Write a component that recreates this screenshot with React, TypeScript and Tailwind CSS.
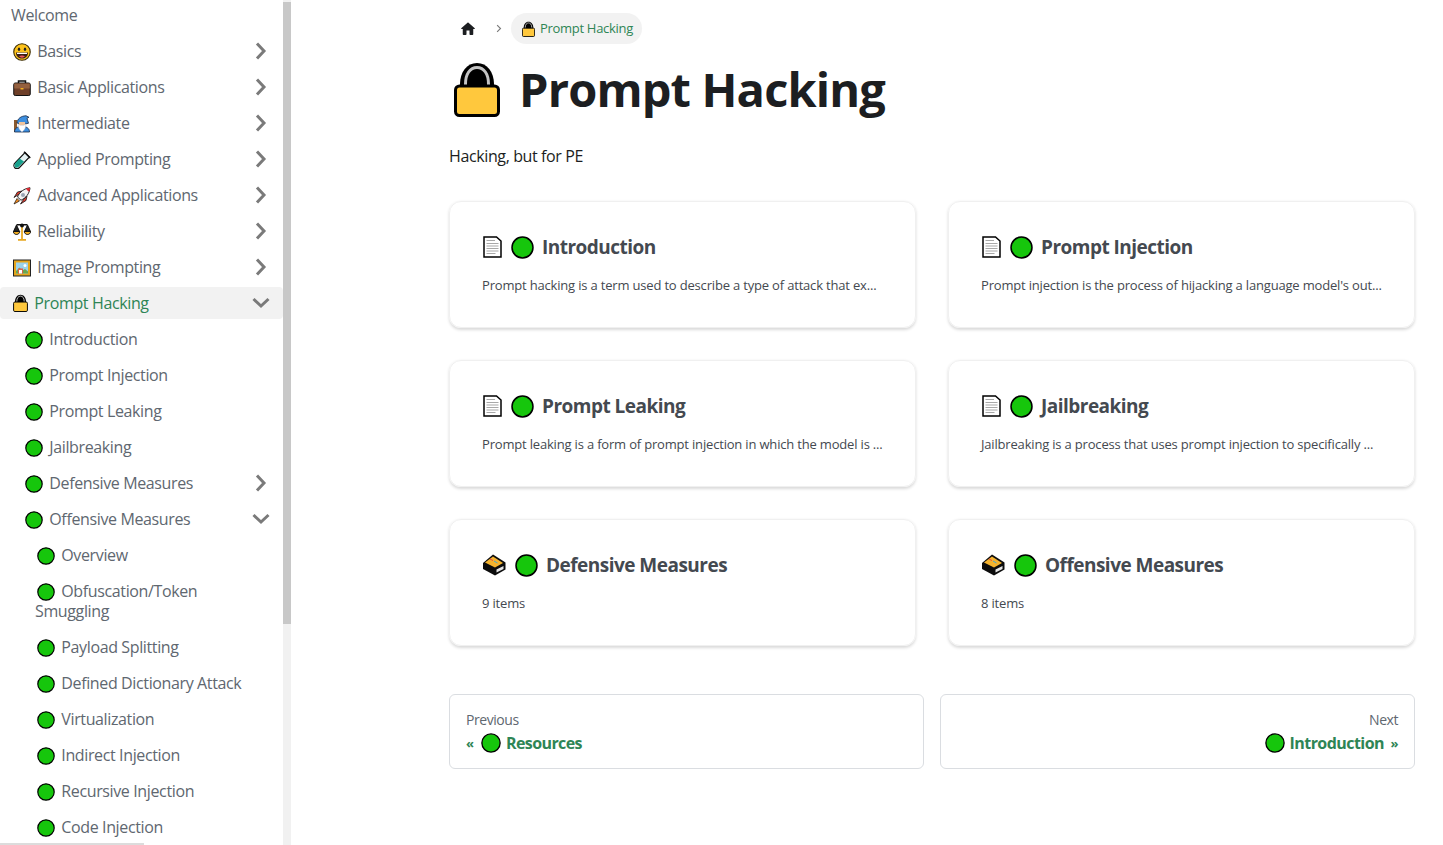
import React from "react";

const Circle = ({ s = 18, cls = "" }: { s?: number; cls?: string }) => (
  <svg width={s} height={s} viewBox="0 0 36 36" className={"inline-block shrink-0 " + cls}>
    <circle cx="18" cy="18" r="16.4" fill="#16c60c" stroke="#000" strokeWidth="2.4" />
  </svg>
);
const Smile = () => (
  <svg width="18" height="18" viewBox="0 0 36 36" className="inline-block align-[-4px] mx-[2px]">
    <circle cx="18" cy="18" r="16.500" fill="#fcc21b" stroke="#3a2a00" strokeWidth="2.200" />
    <ellipse cx="12" cy="12.500" rx="2.400" ry="3.600" fill="#222" />
    <ellipse cx="24" cy="12.500" rx="2.400" ry="3.600" fill="#222" />
    <path d="M6 19h24c0 8-6 12-12 12S6 27 6 19z" fill="#3a1f14" />
    <path d="M8 19.500h20v2.500H8z" fill="#fff" />
    <path d="M12 27c3-2.500 9-2.500 12 0-3 3-9 3-12 0z" fill="#f0565c" />
  </svg>
);
const Brief = () => (
  <svg width="18" height="18" viewBox="0 0 36 36" className="inline-block align-[-4px] mx-[2px]">
    <path d="M11 10V4h14v6" fill="none" stroke="#111" strokeWidth="3" />
    <rect x="1.500" y="8" width="33" height="25" rx="3" fill="#6e3f28" stroke="#111" strokeWidth="2" />
    <rect x="2.500" y="9" width="31" height="10" fill="#94603f" />
    <rect x="15" y="18" width="6" height="3" fill="#f2b01e" />
  </svg>
);
const Wizard = () => (
  <svg width="18" height="18" viewBox="0 0 36 36" className="inline-block align-[-4px] mx-[2px]">
    <path d="M5 10v24" stroke="#8a5a30" strokeWidth="6" />
    <path d="M3 34c0-7 5-11 15-11s15 4 15 11z" fill="#3d8fe0" stroke="#1a2a44" strokeWidth="1.600" />
    <path d="M8 16C9 7 16 2 26 1.500l6 3-4 2 3 10c-6 2-17 2-23-.5z" fill="#3d8fe0" stroke="#1a2a44" strokeWidth="1.600" />
    <rect x="12" y="14" width="12" height="7" fill="#f2c49b" />
    <path d="M10.500 18l4 2.500h7l4-2.500c1 7-3 13-7.500 16-4.500-3-8.500-9-7.500-16z" fill="#fff" stroke="#aab" strokeWidth=".8" />
  </svg>
);
const Tube = () => (
  <svg width="18" height="18" viewBox="0 0 36 36" className="inline-block align-[-4px] mx-[2px]">
    <path d="M24 3l9 9L13 33c-3 3-7 3-9.500 .5S1 27 4 24z" fill="#e6f2f4" stroke="#111" strokeWidth="2.200" />
    <path d="M13 15l9 6L11 32c-3 2-5 2-7 0s-1-5 1-8z" fill="#16a08c" />
    <path d="M22 1.500l12.500 12.500" stroke="#111" strokeWidth="3" />
  </svg>
);
const Rocket = () => (
  <svg width="18" height="18" viewBox="0 0 36 36" className="inline-block align-[-4px] mx-[2px]">
    <path d="M11 15l-9 6 7-11 9-2zM21 25l-6 9 11-7 2-9z" fill="#e03c30" stroke="#111" strokeWidth="1.600" />
    <path d="M9 20C13 10 22 3 34 1.500c-1 12-8 20-18 25z" fill="#f4f4f4" stroke="#111" strokeWidth="1.800" />
    <path d="M26 3l8-1.500-1.500 8c-2-1-5.500-4-6.500-6.500z" fill="#e0242c" />
    <circle cx="20" cy="16" r="4" fill="#9aa6b4" />
    <path d="M8 23l5 5-11 6z" fill="#f58a1c" stroke="#111" strokeWidth="1.400" />
  </svg>
);
const Scale = () => (
  <svg width="18" height="18" viewBox="0 0 36 36" className="inline-block align-[-4px] mx-[2px]">
    <path d="M18 4v28M10 33.500h16" stroke="#e8a820" strokeWidth="3.500" fill="none" />
    <path d="M7 3.500h22" stroke="#111" strokeWidth="3" />
    <path d="M7 4l-6 13h12zM29 4l-6 13h12z" fill="#222" stroke="#111" strokeWidth="2" />
    <path d="M.5 17c1 8 12 8 13 0zM22.500 17c1 8 12 8 13 0z" fill="#f0ac20" stroke="#111" strokeWidth="2" />
    <circle cx="18" cy="5" r="4" fill="#111" />
  </svg>
);
const Picture = () => (
  <svg width="18" height="18" viewBox="0 0 36 36" className="inline-block align-[-4px] mx-[2px]">
    <rect x="1" y="2" width="34" height="32" fill="#e6a51c" stroke="#222" strokeWidth="2" />
    <rect x="6" y="7" width="24" height="22" fill="#9bd2ea" />
    <path d="M6 29v-5l7-7 6 6 5-3 6 5v4z" fill="#6aa84f" />
    <path d="M10 19h10v10H10z" fill="#e0604a" />
    <path d="M12 22h6v7h-6z" fill="#fff" />
    <circle cx="24" cy="13" r="3" fill="#fff" />
  </svg>
);
const Lock = ({ w, h, cls }: { w: number; h: number; cls: string }) => (
  <svg width={w} height={h} viewBox="0 0 46 56" className={cls}>
    <path d="M6 30V23C6 11 13 2 23 2s17 9 17 21v7z" fill="#000" />
    <path d="M11.500 26V23C11.500 13 16 6.500 23 6.500s11.500 6.500 11.500 16.500v3" fill="none" stroke="#c4c4c4" strokeWidth="3" />
    <rect x="1.500" y="25" width="43" height="29.500" rx="4" fill="#ffc83d" stroke="#000" strokeWidth="3" />
  </svg>
);
const Doc = () => (
  <svg width="20" height="22" viewBox="0 0 20 22" className="inline-block">
    <path d="M2 1h12.500l4.500 4v16H2z" fill="#fff" stroke="#000" strokeWidth="1.500" />
    <path d="M4.500 4.500h8.500M4.500 7.500h12M4.500 10h12M4.500 12.500h12M4.500 15h12M4.500 17.500h9" stroke="#a8a8a8" strokeWidth="1.100" />
  </svg>
);
const Box = () => (
  <svg width="24" height="22" viewBox="0 0 24 22" className="inline-block">
    <path d="M1 9L11 .5l12.500 8v7L13 21.500 1 15z" fill="#0c0c0c" />
    <path d="M3 8.500L11 2.500l10 6.500-8 4.500z" fill="#f5b32e" />
    <path d="M14.500 15.500l7-3.500v3l-7 3.500z" fill="#e6e6e6" />
    <path d="M8 5l3 1.500" stroke="#e04a4a" strokeWidth="1" />
    <path d="M12 7l3.500 2" stroke="#3fa7d6" strokeWidth="1" />
  </svg>
);

const Chev = ({ down }: { down?: boolean }) => (
  <svg width="18" height="18" viewBox="0 0 18 18" className="text-[#7a7a7a]">
    <path d={down ? "M1.500 5l7.500 7 7.500-7" : "M5 1.500l7 7.500-7 7.500"} fill="none" stroke="currentColor" strokeWidth="3" />
  </svg>
);

type R = { t: string; lvl: number; ic?: React.ReactNode; c?: "r" | "d"; active?: boolean };
const dot = <Circle cls="align-[-4px] mx-[2px]" />;
const rows: R[] = [
  { t: "Welcome", lvl: 1 },
  { t: "Basics", lvl: 1, ic: <Smile />, c: "r" },
  { t: "Basic Applications", lvl: 1, ic: <Brief />, c: "r" },
  { t: "Intermediate", lvl: 1, ic: <Wizard />, c: "r" },
  { t: "Applied Prompting", lvl: 1, ic: <Tube />, c: "r" },
  { t: "Advanced Applications", lvl: 1, ic: <Rocket />, c: "r" },
  { t: "Reliability", lvl: 1, ic: <Scale />, c: "r" },
  { t: "Image Prompting", lvl: 1, ic: <Picture />, c: "r" },
  { t: "Prompt Hacking", lvl: 1, ic: <Lock w={15} h={18} cls="inline-block align-[-3px] mx-[2px]" />, c: "d", active: true },
  { t: "Introduction", lvl: 2, ic: dot },
  { t: "Prompt Injection", lvl: 2, ic: dot },
  { t: "Prompt Leaking", lvl: 2, ic: dot },
  { t: "Jailbreaking", lvl: 2, ic: dot },
  { t: "Defensive Measures", lvl: 2, ic: dot, c: "r" },
  { t: "Offensive Measures", lvl: 2, ic: dot, c: "d" },
  { t: "Overview", lvl: 3, ic: dot },
  { t: "Obfuscation/Token Smuggling", lvl: 3, ic: dot },
  { t: "Payload Splitting", lvl: 3, ic: dot },
  { t: "Defined Dictionary Attack", lvl: 3, ic: dot },
  { t: "Virtualization", lvl: 3, ic: dot },
  { t: "Indirect Injection", lvl: 3, ic: dot },
  { t: "Recursive Injection", lvl: 3, ic: dot },
  { t: "Code Injection", lvl: 3, ic: dot },
];

const pad: Record<number, string> = { 1: "pl-[11px]", 2: "pl-[23px]", 3: "pl-[35px] pr-[40px]" };

const Sidebar = () => (
  <aside className="relative flex h-full w-[291px] shrink-0 overflow-hidden">
    <nav className="flex w-[283px] shrink-0 flex-col gap-1 -mt-[1px] text-[16px] leading-5 tracking-[-0.37px] text-[#606770]">
      {rows.map((r) => (
        <div key={r.t} className={"flex shrink-0 items-center justify-between rounded " + (r.active ? "bg-[#f2f2f2] text-[#2e8555]" : "")}>
          <span className={"block flex-1 py-[6px] " + pad[r.lvl]}>
            {r.ic}
            {r.ic ? <span className="mr-[0.5px]"> </span> : ""}
            {r.t}
          </span>
          {r.c && (
            <span className="flex h-8 w-11 items-center justify-center">
              <Chev down={r.c === "d"} />
            </span>
          )}
        </div>
      ))}
    </nav>
    <div className="w-2 shrink-0 bg-[#f1f1f1]">
      <div className="mt-[2px] h-[622px] bg-[#c8c8c8]" />
    </div>
    <div className="absolute bottom-0 left-0 h-[2px] w-[144px] bg-[#dcdcdc]" />
  </aside>
);

const cards = [
  { ic: <Doc />, t: "Introduction", d: "Prompt hacking is a term used to describe a type of attack that ex..." },
  { ic: <Doc />, t: "Prompt Injection", d: "Prompt injection is the process of hijacking a language model's out..." },
  { ic: <Doc />, t: "Prompt Leaking", d: "Prompt leaking is a form of prompt injection in which the model is ..." },
  { ic: <Doc />, t: "Jailbreaking", d: "Jailbreaking is a process that uses prompt injection to specifically ..." },
  { ic: <Box />, t: "Defensive Measures", d: "9 items" },
  { ic: <Box />, t: "Offensive Measures", d: "8 items" },
];

export default function App() {
  return (
    <div className="flex h-[845px] overflow-hidden bg-white font-['Open_Sans','Noto_Sans',sans-serif] text-[#1c1e21]">
      <Sidebar />
      <main className="flex-1 pl-[158px] pr-[28px]">
        <div className="mt-[13px] flex h-[31px] items-center">
          <svg viewBox="0 0 24 24" width="18" height="18" className="ml-[10px]">
            <path d="M10 19v-5h4v5c0 .55.45 1 1 1h3c.55 0 1-.45 1-1v-7h1.700c.46 0 .68-.57.33-.87L12.670 3.600c-.38-.34-.96-.34-1.340 0l-8.360 7.530c-.34.3-.13.87.33.87H5v7c0 .55.45 1 1 1h3c.55 0 1-.45 1-1z" fill="#1c1e21" />
          </svg>
          <svg viewBox="0 0 8 12" width="6" height="9" className="ml-[19px] mr-[9px]">
            <path d="M1.500 1.500L6 6l-4.500 4.500" fill="none" stroke="#7a7a7a" strokeWidth="1.500" />
          </svg>
          <div className="flex h-[31px] items-center gap-[5px] rounded-full bg-[#f2f2f2] pl-[11px] pr-[9px] pt-[1px] text-[13px] tracking-[-0.3px] text-[#2e8555]">
            <Lock w={13} h={16} cls="inline-block -mt-[1px]" />
            Prompt Hacking
          </div>
        </div>
        <h1 className="mt-[15px] flex items-center gap-[19px] pl-[5px] text-[47px] font-bold leading-[60px] tracking-[-0.85px]">
          <Lock w={46} h={56} cls="block" />
          Prompt Hacking
        </h1>
        <p className="mt-[25px] text-[16px] leading-6 tracking-[-0.38px]">Hacking, but for PE</p>
        <div className="mt-[33px] grid grid-cols-2 gap-8">
          {cards.map((c) => (
            <div key={c.t} className="h-[127px] rounded-xl border border-[#f0f0f0] p-8 shadow-[0_1.5px_3px_0_rgba(0,0,0,0.15)]">
              <h2 className="flex h-[26px] items-center gap-[8px] text-[19px] font-bold tracking-[-0.52px] text-[#444950]">
                <span className="flex">{c.ic}</span>
                <Circle s={23} cls="ml-[1px]" />
                {c.t}
              </h2>
              <p className="mt-[15px] whitespace-nowrap text-[13px] leading-5 tracking-[-0.18px] text-[#444950]">{c.d}</p>
            </div>
          ))}
        </div>
        <div className="mt-[48px] grid grid-cols-2 gap-4">
          <div className="h-[75px] rounded-md border border-[#dadde1] px-4 pt-[15px]">
            <div className="text-[14px] leading-5 tracking-[-0.45px] text-[#606770]">Previous</div>
            <div className="mt-[1px] flex items-center text-[16px] font-bold leading-6 tracking-[-0.6px] text-[#2e8555]">
              <span className="mr-[6px] w-[9px] text-[13px]">«</span>
              <Circle s={20} />
              <span className="ml-[5px]">Resources</span>
            </div>
          </div>
          <div className="h-[75px] rounded-md border border-[#dadde1] px-4 pt-[15px] text-right">
            <div className="text-[14px] leading-5 tracking-[-0.45px] text-[#606770]">Next</div>
            <div className="mt-[1px] flex items-center justify-end text-[16px] font-bold leading-6 tracking-[-0.55px] text-[#2e8555]">
              <Circle s={20} />
              <span className="ml-[5px]">Introduction</span>
              <span className="ml-[4px] w-[10px] text-[13px]">»</span>
            </div>
          </div>
        </div>
      </main>
    </div>
  );
}
